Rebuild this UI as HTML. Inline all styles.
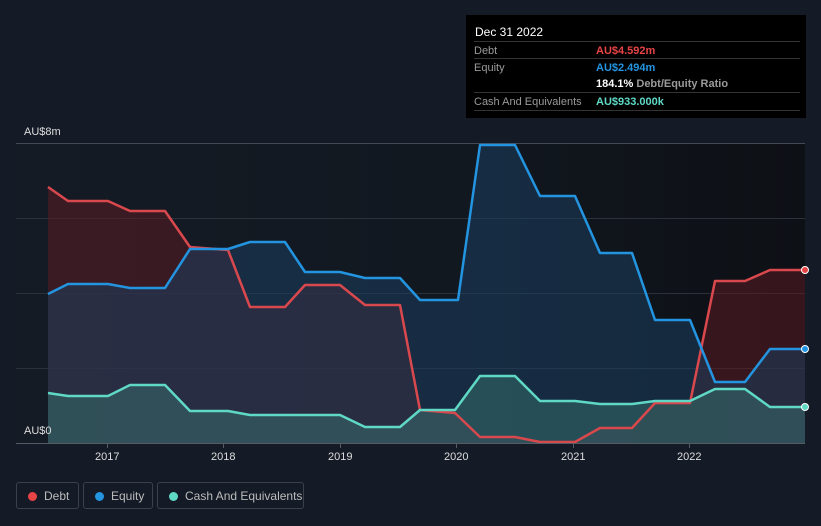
<!DOCTYPE html>
<html><head><meta charset="utf-8"><style>
body{margin:0;width:821px;height:526px;background:#151b26;font-family:"Liberation Sans",sans-serif;overflow:hidden;position:relative}
.tt{position:absolute;left:466px;top:15px;width:340px;height:103px;background:#000;color:#fff;font-size:11px}
.tt .h{position:absolute;left:9px;top:10px;font-size:12px}
.row{position:absolute;left:8px;width:326px;border-top:1px solid #333;height:17px}
.row span{position:absolute;top:3px}
.lbl{left:0;color:#9a9a9a}.val{left:122px;font-weight:bold}
.lg{position:absolute;top:482px;height:27px;border:1px solid #3a414c;border-radius:3px;color:#bbb;font-size:12px;line-height:27px;box-sizing:border-box}
.lg i{position:absolute;left:11px;top:9px;width:9px;height:9px;border-radius:50%}
.lg span{position:absolute;left:27px;top:0}
.ax{position:absolute;color:#ddd;font-size:11px}
</style></head><body>
<svg width="821" height="526" style="position:absolute;left:0;top:0">
<defs><linearGradient id="pg" x1="0" x2="1"><stop offset="0" stop-color="#151b25"/><stop offset="0.55" stop-color="#121820"/><stop offset="1" stop-color="#0d1015"/></linearGradient></defs>
<rect x="16" y="143" width="789" height="300" fill="url(#pg)"/>
<g stroke="#2c323b" stroke-width="1"><line x1="16" y1="143.5" x2="805" y2="143.5" stroke="#444a52"/><line x1="16" y1="218.5" x2="805" y2="218.5"/><line x1="16" y1="293.5" x2="805" y2="293.5"/><line x1="16" y1="368.5" x2="805" y2="368.5"/></g>
<polygon fill="#5a1c22" fill-opacity="0.55" points="48,443 48,187 68,201 108,201 130,211 165,211 190,247 228,250 250,307 285,307 305,285 340,285 365,305 400,305 420,410 455,413 480,437 515,437 540,442 575,442 600,428 632,428 655,403 690,403 715,281 745,281 770,270 805,270 805,443"/>
<polygon fill="#1c3e5e" fill-opacity="0.55" points="48,443 48,294 68,284 108,284 130,288 165,288 190,249 228,249 250,242 285,242 305,272 340,272 365,278 400,278 420,300 458,300 480,145 515,145 540,196 575,196 600,253 632,253 655,320 690,320 715,382 745,382 770,349 805,349 805,443"/>
<polygon fill="#3a7a74" fill-opacity="0.45" points="48,443 48,393 68,396 108,396 130,385 165,385 190,411 228,411 250,415 340,415 365,427 400,427 420,410 455,410 480,376 515,376 540,401 575,401 600,404 632,404 655,401 690,401 715,389 745,389 770,407 805,407 805,443"/>
<g fill="none" stroke-width="2.5" stroke-linejoin="round">
<polyline stroke="#d9484d" points="48,187 68,201 108,201 130,211 165,211 190,247 228,250 250,307 285,307 305,285 340,285 365,305 400,305 420,410 455,413 480,437 515,437 540,442 575,442 600,428 632,428 655,403 690,403 715,281 745,281 770,270 805,270"/>
<polyline stroke="#2394e0" points="48,294 68,284 108,284 130,288 165,288 190,249 228,249 250,242 285,242 305,272 340,272 365,278 400,278 420,300 458,300 480,145 515,145 540,196 575,196 600,253 632,253 655,320 690,320 715,382 745,382 770,349 805,349"/>
<polyline stroke="#5fd9c6" points="48,393 68,396 108,396 130,385 165,385 190,411 228,411 250,415 340,415 365,427 400,427 420,410 455,410 480,376 515,376 540,401 575,401 600,404 632,404 655,401 690,401 715,389 745,389 770,407 805,407"/>
</g>
<circle cx="805" cy="270" r="3.5" fill="#e84446" stroke="#fff"/><circle cx="805" cy="349" r="3.5" fill="#2394e0" stroke="#fff"/><circle cx="805" cy="407" r="3.5" fill="#5fd9c6" stroke="#fff"/>
<line x1="16" y1="443.5" x2="805" y2="443.5" stroke="#555b63"/>
<g stroke="#555b63"><line x1="107.5" y1="443" x2="107.5" y2="448"/><line x1="223.5" y1="443" x2="223.5" y2="448"/><line x1="340.5" y1="443" x2="340.5" y2="448"/><line x1="456.5" y1="443" x2="456.5" y2="448"/><line x1="573.5" y1="443" x2="573.5" y2="448"/><line x1="689.5" y1="443" x2="689.5" y2="448"/></g>
</svg>
<div class="ax" style="left:24px;top:126px">AU$8m</div>
<div class="ax" style="left:24px;top:425px">AU$0</div>
<div class="ax" style="left:95px;top:451px">2017</div><div class="ax" style="left:211px;top:451px">2018</div><div class="ax" style="left:328px;top:451px">2019</div><div class="ax" style="left:444px;top:451px">2020</div><div class="ax" style="left:561px;top:451px">2021</div><div class="ax" style="left:677px;top:451px">2022</div>
<div class="tt"><div class="h">Dec 31 2022</div>
<div class="row" style="top:26px"><span class="lbl">Debt</span><span class="val" style="color:#e84446">AU$4.592m</span></div>
<div class="row" style="top:43px"><span class="lbl">Equity</span><span class="val" style="color:#2394e0">AU$2.494m</span></div>
<div class="row" style="top:60px;border-top:none"><span class="val" style="color:#fff">184.1% <b style="color:#9a9a9a">Debt/Equity Ratio</b></span></div>
<div class="row" style="top:77px;border-bottom:1px solid #333"><span class="lbl">Cash And Equivalents</span><span class="val" style="color:#5fd9c6">AU$933.000k</span></div>
</div>
<div class="lg" style="left:16px;width:63px"><i style="background:#e84446"></i><span>Debt</span></div>
<div class="lg" style="left:83px;width:70px"><i style="background:#2394e0"></i><span>Equity</span></div>
<div class="lg" style="left:157px;width:147px"><i style="background:#5fd9c6"></i><span>Cash And Equivalents</span></div>
</body></html>
